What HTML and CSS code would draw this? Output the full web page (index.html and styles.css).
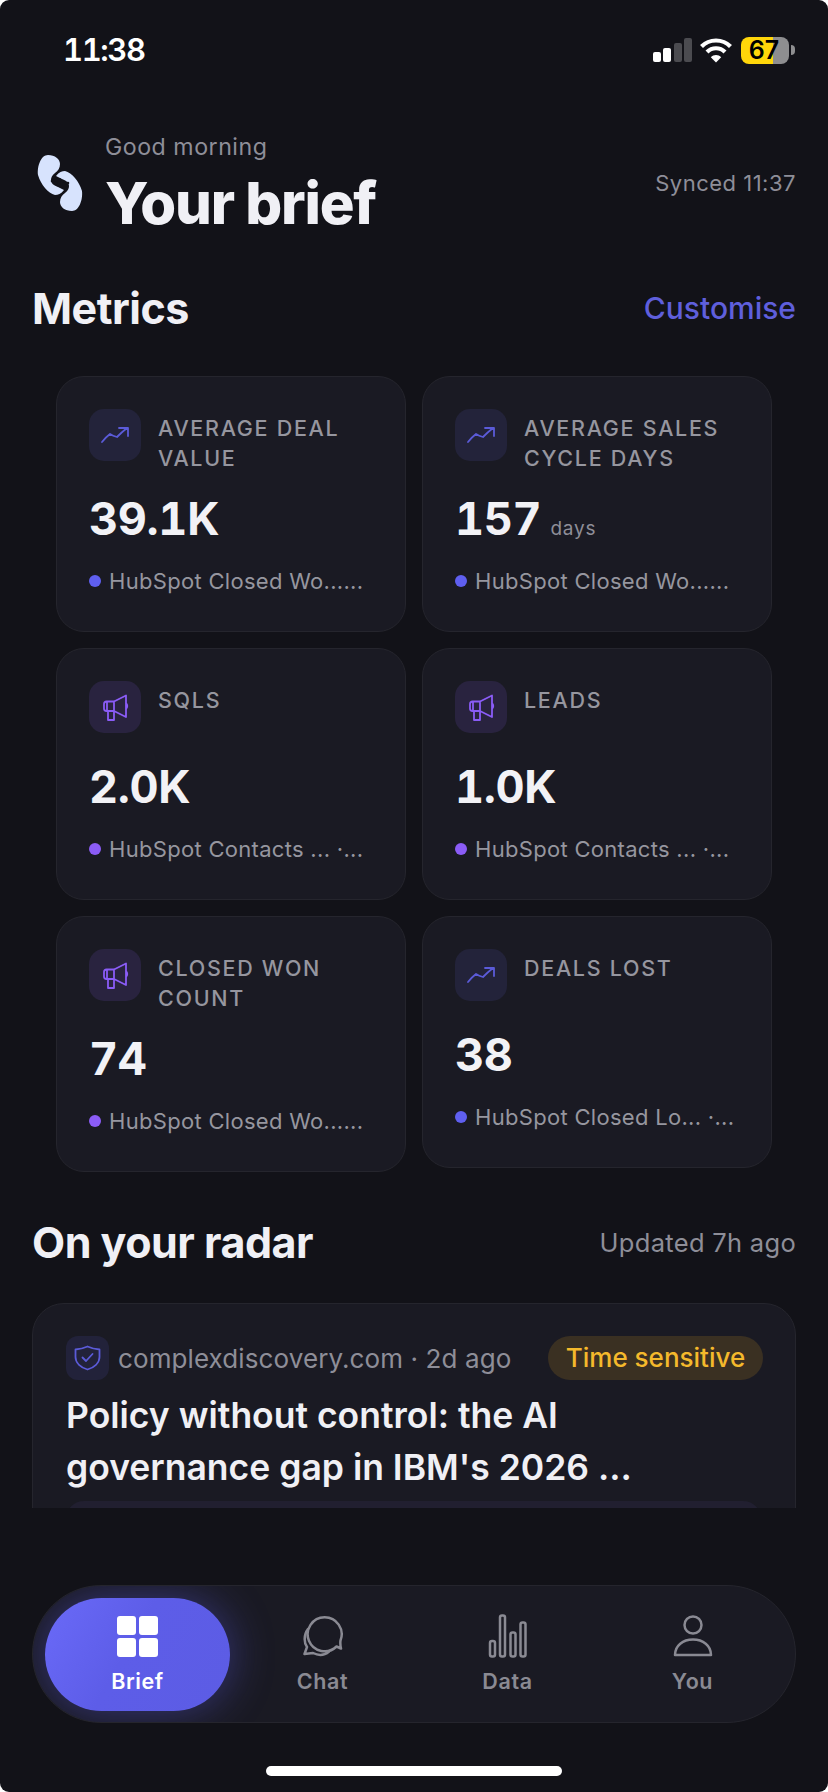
FILE: index.html
```html
<!DOCTYPE html>
<html lang="en">
<head>
<meta charset="utf-8">
<title>Your brief</title>
<link rel="stylesheet" href="styles.css">
</head>
<body>
<div class="screen">
  <div class="status">
    <span class="time">11:38</span>
    <div class="status-icons">
      <div class="signal"><i class="b1"></i><i class="b2"></i><i class="b3"></i><i class="b4"></i></div>
      <svg class="wifi" viewBox="0 0 32 26"><path d="M1.5 9.5C9.5 1.5 22.5 1.5 30.5 9.5" class="w"/><path d="M7 15C12 10 20 10 25 15" class="w"/><path d="M16 25.5L10.8 20.2C13.6 17.4 18.4 17.4 21.2 20.2Z" fill="#fff"/></svg>
      <div class="battery-wrap"><div class="battery">67</div><div class="nub"></div></div>
    </div>
  </div>

  <div class="scroll">
    <header class="top">
      <svg class="logo" viewBox="0 0 46 58">
        <defs>
          <clipPath id="logo-clip"><path d="M11 1C18 1 23 5 23 10C23 14 21 17 18 19C15 21 14 24 14 26C14 29 16 31 21 33L27 36C24 40 21 41 18 41C11 39 4 31 1 21C0 12 4 1 11 1Z"/></clipPath>
        </defs>
        <path class="lobe" d="M11 1C18 1 23 5 23 10C23 14 21 17 18 19C15 21 14 24 14 26C14 29 16 31 21 33L27 36C24 40 21 41 18 41C11 39 4 31 1 21C0 12 4 1 11 1Z"/>
        <path class="lobe" transform="rotate(180 23 29)" d="M11 1C18 1 23 5 23 10C23 14 21 17 18 19C15 21 14 24 14 26C14 29 16 31 21 33L27 36C24 40 21 41 18 41C11 39 4 31 1 21C0 12 4 1 11 1Z"/>
        <g clip-path="url(#logo-clip)"><path class="lobe-over" transform="rotate(180 23 29)" d="M11 1C18 1 23 5 23 10C23 14 21 17 18 19C15 21 14 24 14 26C14 29 16 31 21 33L27 36C24 40 21 41 18 41C11 39 4 31 1 21C0 12 4 1 11 1Z"/></g>
        <path d="M15 27L23 25.500L21 31L31 29" class="slash"/>
      </svg>
      <div class="top-text">
        <div class="greeting">Good morning</div>
        <h1 class="title">Your brief</h1>
      </div>
      <div class="synced">Synced 11:37</div>
    </header>

    <div class="section-head metrics-head">
      <h2 class="section-title">Metrics</h2>
      <span class="customise">Customise</span>
    </div>

    <div class="grid">
      <article class="metric">
        <div class="metric-head">
          <div class="mi mi-blue"><svg class="trend" viewBox="0 0 30 18"><path d="M2 16Q6 11 10 8Q13 10 17 11Q22 6 27 2M19 2H28V10"/></svg></div>
          <div class="metric-label">AVERAGE DEAL VALUE</div>
        </div>
        <div class="value">39.1K</div>
        <div class="source"><i class="dot dot-blue"></i><span>HubSpot Closed Wo......</span></div>
      </article>
      <article class="metric">
        <div class="metric-head">
          <div class="mi mi-blue"><svg class="trend" viewBox="0 0 30 18"><path d="M2 16Q6 11 10 8Q13 10 17 11Q22 6 27 2M19 2H28V10"/></svg></div>
          <div class="metric-label">AVERAGE SALES CYCLE DAYS</div>
        </div>
        <div class="value">157<span class="unit">days</span></div>
        <div class="source"><i class="dot dot-blue"></i><span>HubSpot Closed Wo......</span></div>
      </article>
      <article class="metric">
        <div class="metric-head">
          <div class="mi mi-purple"><svg class="horn" viewBox="0 0 27 27"><path d="M12 7.500L24 1.500V23L12 17ZM12 7.500H4.500Q2 7.500 2 10V14.500Q2 17 4.500 17H12M5 7.500V17M6 17V26H12V18M24 9Q26.500 12 24 15"/></svg></div>
          <div class="metric-label">SQLS</div>
        </div>
        <div class="value">2.0K</div>
        <div class="source"><i class="dot dot-purple"></i><span>HubSpot Contacts ... ·...</span></div>
      </article>
      <article class="metric">
        <div class="metric-head">
          <div class="mi mi-purple"><svg class="horn" viewBox="0 0 27 27"><path d="M12 7.500L24 1.500V23L12 17ZM12 7.500H4.500Q2 7.500 2 10V14.500Q2 17 4.500 17H12M5 7.500V17M6 17V26H12V18M24 9Q26.500 12 24 15"/></svg></div>
          <div class="metric-label">LEADS</div>
        </div>
        <div class="value">1.0K</div>
        <div class="source"><i class="dot dot-purple"></i><span>HubSpot Contacts ... ·...</span></div>
      </article>
      <article class="metric">
        <div class="metric-head">
          <div class="mi mi-purple"><svg class="horn" viewBox="0 0 27 27"><path d="M12 7.500L24 1.500V23L12 17ZM12 7.500H4.500Q2 7.500 2 10V14.500Q2 17 4.500 17H12M5 7.500V17M6 17V26H12V18M24 9Q26.500 12 24 15"/></svg></div>
          <div class="metric-label">CLOSED WON COUNT</div>
        </div>
        <div class="value">74</div>
        <div class="source"><i class="dot dot-purple"></i><span>HubSpot Closed Wo......</span></div>
      </article>
      <article class="metric">
        <div class="metric-head">
          <div class="mi mi-blue"><svg class="trend" viewBox="0 0 30 18"><path d="M2 16Q6 11 10 8Q13 10 17 11Q22 6 27 2M19 2H28V10"/></svg></div>
          <div class="metric-label">DEALS LOST</div>
        </div>
        <div class="value">38</div>
        <div class="source"><i class="dot dot-blue"></i><span>HubSpot Closed Lo... ·...</span></div>
      </article>
    </div>

    <div class="section-head radar-head">
      <h2 class="section-title">On your radar</h2>
      <span class="updated">Updated 7h ago</span>
    </div>

    <article class="news">
      <div class="news-meta">
        <div class="ni"><svg class="shield" viewBox="0 0 27 26"><path d="M13.500 1.500Q19 4 25.500 4.500V12C25.500 18 20 22.500 13.500 24.500C7 22.500 1.500 18 1.500 12V4.500Q8 4 13.500 1.500Z"/><path d="M8.500 12.500L12 16L18.500 9"/></svg></div>
        <span class="news-source">complexdiscovery.com · 2d ago</span>
        <span class="pill">Time sensitive</span>
      </div>
      <h3 class="news-title">Policy without control: the AI governance gap in IBM's 2026 ...</h3>
      <div class="news-box"></div>
    </article>
  </div>

  <nav class="nav">
    <div class="tab tab-active">
      <div class="tab-icon"><div class="squares"><i></i><i></i><i></i><i></i></div></div>
      <span class="tab-label">Brief</span>
    </div>
    <div class="tab">
      <div class="tab-icon"><svg class="ico" viewBox="0 0 42 44"><path d="M34.500 32.500A17 17 0 1 1 38.500 26.500Q38 30 39 34.500Z"/><path d="M6 15C1.500 21 2 29 5 33L2.500 40L11 39C17 42 23 41 27 37.500"/></svg></div>
      <span class="tab-label">Chat</span>
    </div>
    <div class="tab">
      <div class="tab-icon"><svg class="ico" viewBox="0 0 40 44"><rect x="2" y="27" width="5" height="15.500" rx="2"/><rect x="12" y="1.500" width="5" height="41" rx="2"/><rect x="22.500" y="18.500" width="5" height="24" rx="2"/><rect x="32.500" y="8.500" width="5" height="34" rx="2"/></svg></div>
      <span class="tab-label">Data</span>
    </div>
    <div class="tab">
      <div class="tab-icon"><svg class="ico" viewBox="0 0 42 44"><circle cx="21" cy="11" r="8.500"/><path d="M3 41C3 31.500 11 25.500 21 25.500C31 25.500 39 31.500 39 41Z"/></svg></div>
      <span class="tab-label">You</span>
    </div>
  </nav>

  <div class="home"></div>
</div>
</body>
</html>
```

FILE: styles.css
```css
* { box-sizing: border-box; margin: 0; padding: 0; }
html, body { width: 828px; height: 1792px; background: #fff; overflow: hidden; }
body { font-family: Inter, "Liberation Sans", sans-serif; color: #f0f0f5; }
i { display: block; }

.screen {
  width: 828px; height: 1792px; background: #121218;
  border-radius: 9px;
  display: flex; flex-direction: column; overflow: hidden;
}

.status {
  height: 100px; flex: none;
  display: flex; justify-content: space-between; align-items: flex-start;
  padding: 32px 33px 0 63px;
}
.time { font-size: 31px; line-height: 36px; font-weight: 600; color: #fff; font-variant-numeric: tabular-nums; letter-spacing: -1.400px; }
.status-icons { display: flex; align-items: center; height: 36px; }
.signal { display: flex; align-items: flex-end; gap: 2.400px; height: 24px; margin-right: 8px; }
.signal i { width: 8px; border-radius: 2px; background: #4b4b50; }
.signal .b1 { height: 10px; background: #fff; }
.signal .b2 { height: 14px; background: #fff; }
.signal .b3 { height: 19px; }
.signal .b4 { height: 24px; }
.wifi { width: 32px; height: 26px; margin-right: 9px; }
.w { fill: none; stroke: #fff; stroke-width: 4.200; }
.battery-wrap { display: flex; align-items: center; }
.battery {
  width: 48px; height: 27px; border-radius: 8px;
  background: linear-gradient(90deg, #ffd60a 0 32px, #8e8e90 32px);
  color: #000; font-size: 25px; line-height: 27px; font-weight: 600; text-align: center;
  padding-right: 2px;
}
.nub { width: 4px; height: 10px; margin-left: 2px; background: #8e8e90; border-radius: 0 4px 4px 0; }

.scroll { height: 1408px; flex: none; overflow: hidden; padding: 30px 32px 0; }

.top { display: flex; align-items: center; }
.logo { width: 46px; height: 58px; margin: 0 22px 0 5px; flex: none; }
.lobe { fill: #d7e3fd; }
.lobe-over { fill: #a9c4fb; }
.slash { fill: none; stroke: #121218; stroke-width: 2.600px; stroke-linejoin: round; stroke-linecap: round; }
.top-text { flex: 1; }
.greeting { font-size: 23.200px; line-height: 34px; color: #8e8e98; letter-spacing: 0.5px; }
.title { font-size: 58px; line-height: 66px; font-weight: 800; letter-spacing: -1.200px; color: #f0f0f5; margin-top: 6px; }
.synced { font-size: 22px; line-height: 30px; color: #8e8e98; letter-spacing: 0.5px; }

.section-head { display: flex; justify-content: space-between; align-items: center; height: 52px; }
.metrics-head { margin-top: 46px; }
.radar-head { margin-top: 44px; }
.section-title { font-size: 43px; line-height: 52px; font-weight: 700; letter-spacing: -0.500px; color: #f0f0f5; }
.customise { font-size: 30px; font-weight: 500; color: #5f5fdc; }
.updated { font-size: 25.500px; color: #8e8e98; letter-spacing: 0.3px; }

.grid {
  display: grid; grid-template-columns: 350px 350px; gap: 16px;
  align-items: start; margin: 42px 24px 0;
}
.metric {
  background: #1a1a23; border: 1px solid #25252d; border-radius: 28px;
  padding: 32px 32px 35px;
}
.metric-head { display: flex; gap: 17px; min-height: 60px; }
.mi {
  width: 52px; height: 52px; flex: none; border-radius: 15px;
  display: flex; align-items: center; justify-content: center;
}
.mi-blue { background: #23233a; }
.mi-purple { background: #29233f; }
.trend { width: 30px; height: 18px; fill: none; stroke: #5b5bd8; stroke-width: 1.800; stroke-linejoin: round; stroke-linecap: round; }
.horn { width: 27px; height: 27px; fill: none; stroke: #8a5cf6; stroke-width: 1.800; stroke-linejoin: round; stroke-linecap: round; }
.metric-label {
  margin-top: 4px; font-size: 21.500px; line-height: 30px; font-weight: 500;
  letter-spacing: 1.700px; color: #96969f;
}
.value {
  margin-top: 19px; font-size: 45px; line-height: 54px; font-weight: 700; letter-spacing: -0.300px;
  color: #f2f2f6; white-space: nowrap; font-variant-numeric: tabular-nums;
}
.unit { font-size: 19px; line-height: 1; font-weight: 400; letter-spacing: 0.8px; color: #8e8e98; margin-left: 9px; }
.source {
  margin-top: 20px; display: flex; align-items: center; gap: 8px;
  font-size: 22px; line-height: 30px; color: #96969f; letter-spacing: 0.3px; white-space: nowrap;
}
.dot { width: 12px; height: 12px; border-radius: 50%; flex: none; }
.dot-blue { background: #5f5ff0; }
.dot-purple { background: #8b5cf6; }

.news {
  margin-top: 35px; height: 400px;
  background: #1a1a23; border: 1px solid #25252d; border-radius: 32px;
  padding: 32px 32px 0 33px;
}
.news-meta { display: flex; align-items: center; height: 44px; }
.ni {
  width: 43px; height: 44px; flex: none; border-radius: 12px; background: #22223a;
  display: flex; align-items: center; justify-content: center; margin-right: 9px;
}
.shield { width: 27px; height: 26px; fill: none; stroke: #5b5bd8; stroke-width: 1.800; stroke-linejoin: round; stroke-linecap: round; }
.news-source { flex: 1; font-size: 26px; color: #8e8e98; letter-spacing: 0.1px; white-space: nowrap; }
.pill {
  width: 215px; height: 44px; border-radius: 22px; background: #3a3022;
  color: #f4b92c; font-size: 26px; line-height: 44px; font-weight: 500; text-align: center;
  white-space: nowrap;
}
.news-title { margin-top: 10px; font-size: 35.500px; line-height: 52px; font-weight: 600; color: #f0f0f5; }
.news-box { margin-top: 7px; height: 60px; border-radius: 18px; background: #211f30; margin-right: 2px; }

.nav {
  flex: none; width: 764px; height: 138px; margin: 77px 0 0 32px;
  background: #1a1a23; border: 1px solid #25252d; border-radius: 69px;
  padding: 12px 10px 11px 12px; overflow: hidden;
  display: grid; grid-template-columns: repeat(4, 185px);
}
.tab {
  display: flex; flex-direction: column; align-items: center;
  border-radius: 57px; padding-top: 16px; color: #8a8a93;
}
.tab-active {
  background: linear-gradient(120deg, #6a6af8 0%, #5d5de8 45%, #5c5ce4 100%);
  box-shadow: 0 0 44px rgba(96, 96, 245, 0.42);
  color: #fff;
}
.tab-icon { height: 44px; display: flex; align-items: center; justify-content: center; }
.squares { width: 41px; display: grid; grid-template-columns: 19px 19px; gap: 3px; }
.squares i { height: 19px; background: #fff; border-radius: 3px; }
.ico { width: 42px; height: 44px; fill: none; stroke: #8a8a93; stroke-width: 2.500; stroke-linejoin: round; stroke-linecap: round; }
.tab-label { margin-top: 8px; font-size: 21.500px; line-height: 30px; font-weight: 600; letter-spacing: 0.6px; }

.home { flex: none; width: 296px; height: 10px; margin: 43px 0 0 266px; background: #fff; border-radius: 5px; }
```
